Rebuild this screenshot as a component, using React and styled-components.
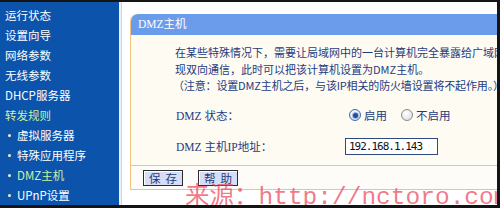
import React from 'react'
import styled, { createGlobalStyle } from 'styled-components'

const cjk = '"Noto Sans CJK SC", "Liberation Sans", sans-serif'
const serifCjk = '"Liberation Serif", "Noto Sans CJK SC", serif'

const GlobalStyle = createGlobalStyle`
  html, body {
    margin: 0;
    padding: 0;
    background: #141414;
  }
  body {
    width: 500px;
    height: 208px;
    overflow: hidden;
    font-family: ${cjk};
  }
`

const Frame = styled.div`
  position: relative;
  display: flex;
  margin: 2px 3px 0 0;
  height: 203px;
  overflow: hidden;
  background: #ffffff;
`

const Sidebar = styled.ul`
  list-style: none;
  margin: 0;
  padding: 3px 0 0 0;
  width: 119px;
  flex: none;
  background: #0b53ab;
  border-right: 2px solid #eef2f8;
`

const MenuItem = styled.li`
  height: 20px;
  line-height: 20px;
  font-size: 11.5px;
  padding-left: ${p => (p.$sub ? 8 : 5)}px;
  color: ${p => (p.$active ? '#c8f2a4' : '#ffffff')};
  white-space: nowrap;
  display: flex;
  align-items: center;
`

const Bullet = styled.span`
  width: 3px;
  height: 3px;
  border-radius: 50%;
  background: #f4f0c0;
  margin-right: 6px;
`

const Main = styled.div`
  flex: 1;
  min-width: 0;
  padding: 12px 0 0 8px;
  border-left: 1px solid #c9d8ef;
  overflow: hidden;
`

const Panel = styled.section`
  width: 440px;
  background: #fefbf3;
  border-left: 1px solid #f0c47f;
  border-bottom: 1px solid #f0c47f;
  border-top-left-radius: 7px;
`

const Header = styled.h2`
  margin: 0;
  height: 21px;
  line-height: 21px;
  padding-left: 7px;
  font-size: 11.5px;
  font-weight: normal;
  color: #ffffff;
  background: #6b9ceb;
  border-top-left-radius: 7px;
  font-family: ${serifCjk};
`

const Body = styled.div`
  padding: 9px 0 9px 44px;
  color: #1d3c80;
  font-size: 11px;
`

const Note = styled.p`
  margin: 0;
  line-height: 16.5px;
  white-space: nowrap;
  text-indent: ${p => (p.$hang ? -2 : 0)}px;
  letter-spacing: ${p => (p.$hang ? -0.15 : 0)}px;
`

const FieldRow = styled.div`
  display: flex;
  align-items: center;
  height: 20px;
  margin-top: ${p => p.$gap}px;
`

const Label = styled.span`
  width: 169px;
  padding-left: 1px;
  flex: none;
  font-size: 11.5px;
  font-family: ${serifCjk};
`

const RadioGroup = styled.div`
  display: flex;
  align-items: center;
  gap: 14px;
  padding-left: 4px;
  font-size: 11.5px;
`

const RadioOption = styled.label`
  display: flex;
  align-items: center;
`

const RadioDot = styled.span`
  width: 10px;
  height: 10px;
  border-radius: 50%;
  border: 1px solid ${p => (p.$on ? '#3a6cb0' : '#8c8c8c')};
  background: radial-gradient(circle at 40% 35%, #ffffff 0%, #e4e4e4 70%, #c8c8c8 100%);
  margin-right: 3px;
  display: flex;
  align-items: center;
  justify-content: center;
  &::after {
    content: '';
    width: 5px;
    height: 5px;
    border-radius: 50%;
    background: ${p => (p.$on ? '#2a4c96' : 'transparent')};
    box-shadow: ${p => (p.$on ? '0 0 0 1px #9cbce6' : 'none')};
  }
`

const IpBox = styled.div`
  width: 88px;
  height: 15px;
  line-height: 15px;
  border: 1px solid #2d4a7c;
  background: #ffffff;
  padding-left: 3px;
  color: #111;
  font-family: "DejaVu Sans Mono", monospace;
  font-size: 11px;
  letter-spacing: -1px;
`

const Footer = styled.div`
  display: flex;
  align-items: center;
  gap: 15px;
  height: 23px;
  padding-left: 12px;
  border-top: 1px solid #f0c47f;
  background: #fefcf8;
`

const Button = styled.button`
  width: 40px;
  height: 16px;
  padding: 0;
  font-size: 11.5px;
  line-height: 14px;
  letter-spacing: 5px;
  text-indent: 5px;
  color: #1d3c80;
  background: #d6ddf5;
  border: 1px solid #2c2c2c;
  box-shadow: inset 1px 1px 0 #ffffff;
  font-family: ${cjk};
`

const Watermark = styled.div`
  position: absolute;
  left: 185px;
  top: 181px;
  font-size: 24.5px;
  line-height: 30px;
  color: rgba(236, 70, 92, 0.72);
  white-space: nowrap;
  pointer-events: none;
  font-family: "Liberation Mono", "Noto Sans CJK SC", monospace;
`

const menu = [
  { text: '运行状态' },
  { text: '设置向导' },
  { text: '网络参数' },
  { text: '无线参数' },
  { text: 'DHCP服务器' },
  { text: '转发规则', active: true },
  { text: '虚拟服务器', sub: true },
  { text: '特殊应用程序', sub: true },
  { text: 'DMZ主机', sub: true, active: true },
  { text: 'UPnP设置', sub: true }
]

export default function App() {
  return (
    <>
      <GlobalStyle />
      <Frame>
        <Sidebar>
          {menu.map(item => (
            <MenuItem key={item.text} $sub={item.sub} $active={item.active}>
              {item.sub && <Bullet />}
              {item.text}
            </MenuItem>
          ))}
        </Sidebar>
        <Main>
          <Panel>
            <Header>DMZ主机</Header>
            <Body>
              <Note>在某些特殊情况下，需要让局域网中的一台计算机完全暴露给广域网，以实</Note>
              <Note>现双向通信，此时可以把该计算机设置为DMZ主机。</Note>
              <Note $hang>（注意：设置DMZ主机之后，与该IP相关的防火墙设置将不起作用。）</Note>
              <FieldRow $gap={11.5}>
                <Label>DMZ 状态：</Label>
                <RadioGroup>
                  <RadioOption>
                    <RadioDot $on />
                    启用
                  </RadioOption>
                  <RadioOption>
                    <RadioDot />
                    不启用
                  </RadioOption>
                </RadioGroup>
              </FieldRow>
              <FieldRow $gap={11}>
                <Label>DMZ 主机IP地址：</Label>
                <IpBox>192.168.1.143</IpBox>
              </FieldRow>
            </Body>
            <Footer>
              <Button>保存</Button>
              <Button>帮助</Button>
            </Footer>
          </Panel>
        </Main>
        <Watermark>来源：http://nctoro.com</Watermark>
      </Frame>
    </>
  )
}
